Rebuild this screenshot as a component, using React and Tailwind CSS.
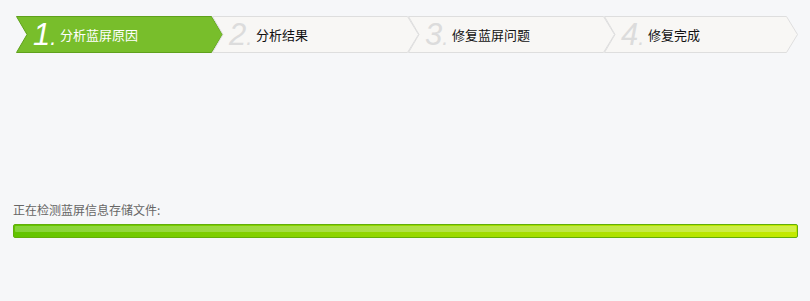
const steps = [
  { n: "1", label: "分析蓝屏原因", active: true },
  { n: "2", label: "分析结果" },
  { n: "3", label: "修复蓝屏问题" },
  { n: "4", label: "修复完成" },
];

function Chevron({ width, active }) {
  const w = width;
  const h = 37;
  const d = 11;
  const pts = `0.5,0.5 ${w - d - 0.5},0.5 ${w - 0.5},${h / 2} ${w - d - 0.5},${h - 0.5} 0.5,${h - 0.5} ${d},${h / 2}`;
  return (
    <svg className="absolute inset-0" width={w} height={h} viewBox={`0 0 ${w} ${h}`}>
      <polygon
        points={pts}
        fill={active ? "#78be2b" : "#f8f7f5"}
        stroke={active ? "#5fa11c" : "#dedede"}
        strokeWidth="1"
      />
    </svg>
  );
}

function Step({ n, label, active, width }) {
  return (
    <div className="relative h-[37px] shrink-0 -ml-[11px] first:ml-0" style={{ width }}>
      <Chevron width={width} active={active} />
      <div className="relative flex h-full items-center pl-[17px]">
        <span
          className={
            "w-[27px] italic text-[31px] leading-none font-['Liberation_Sans',sans-serif] pb-[1px] " +
            (active ? "text-white" : "text-[#dcdcdc]")
          }
        >
          {n}
          <span className="text-[22px]">.</span>
        </span>
        <span
          className={
            "text-[13px] font-['Noto_Sans_CJK_SC',sans-serif] " +
            (active ? "text-white" : "text-[#111]")
          }
        >
          {label}
        </span>
      </div>
    </div>
  );
}

export default function App() {
  return (
    <div className="w-[810px] h-[301px] bg-[#f6f7f9] overflow-hidden">
      <div className="flex pt-[16px] pl-[16px]">
        {steps.map((s, i) => (
          <Step key={s.n} {...s} width={i === 3 ? 194 : 207} />
        ))}
      </div>

      <div className="px-[13px] pt-[149px]">
        <p className="text-[12px] leading-[16px] text-[#666] font-['Noto_Sans_CJK_SC',sans-serif]">
          正在检测蓝屏信息存储文件:
        </p>
        <div className="mt-[6px] w-[785px] h-[14px] rounded-[2px] border border-[#62ae0a] bg-gradient-to-r from-[#62c400] via-[#96d800] to-[#c4ea00] overflow-hidden">
          <div className="h-[6px] mt-[1px] mx-[1px] rounded-[1px] bg-gradient-to-r from-[#86d43a] via-[#b0e248] to-[#d2f048]" />
        </div>
      </div>
    </div>
  );
}
